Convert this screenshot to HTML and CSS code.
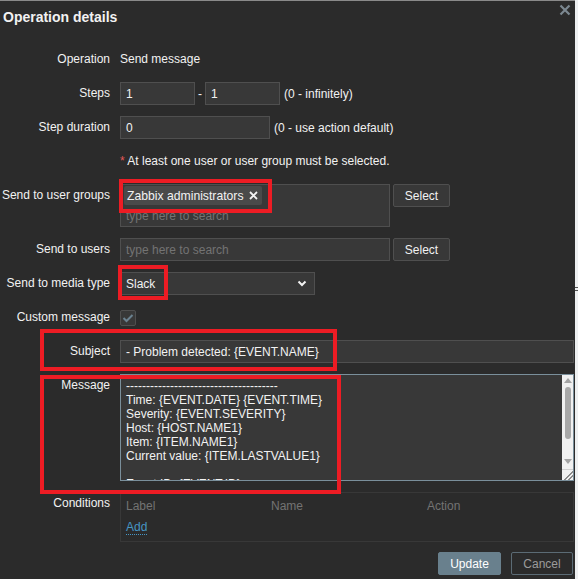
FILE: index.html
```html
<!DOCTYPE html>
<html>
<head>
<meta charset="utf-8">
<link rel="stylesheet" href="styles.css">
</head>
<body>
<div class="page">
<div class="dialog">
  <div class="header">
    <h1 class="title">Operation details</h1>
    <span class="close"><svg width="12" height="12" viewBox="0 0 12 12"><path d="M1.5 1.5 L10.5 10.5 M10.5 1.5 L1.5 10.5" stroke="#7c8891" stroke-width="2.2" fill="none"/></svg></span>
  </div>
  <div class="form">
    <div class="label">Operation</div>
    <div class="field"><span class="value">Send message</span></div>

    <div class="label">Steps</div>
    <div class="field">
      <span class="input w75">1</span><span class="dash">-</span><span class="input w75">1</span><span class="hint">(0 - infinitely)</span>
    </div>

    <div class="label">Step duration</div>
    <div class="field">
      <span class="input w150">0</span><span class="hint">(0 - use action default)</span>
    </div>

    <div class="label"></div>
    <div class="field"><span class="note"><span class="req">*</span> At least one user or user group must be selected.</span></div>

    <div class="label">Send to user groups</div>
    <div class="field top">
      <div class="multiselect">
        <span class="chip">Zabbix administrators<svg class="chip-x" width="9" height="9" viewBox="0 0 9 9"><path d="M1 1 L8 8 M8 1 L1 8" stroke="#f2f2f2" stroke-width="1.8" fill="none"/></svg></span>
        <span class="placeholder ms-ph">type here to search</span>
      </div>
      <span class="btn">Select</span>
    </div>

    <div class="label">Send to users</div>
    <div class="field">
      <span class="input w270"><span class="placeholder">type here to search</span></span>
      <span class="btn">Select</span>
    </div>

    <div class="label">Send to media type</div>
    <div class="field">
      <span class="input w195 select">Slack<svg class="chev" width="10" height="7" viewBox="0 0 10 7"><path d="M1.5 1.5 L5 5 L8.5 1.5" stroke="#f2f2f2" stroke-width="2" fill="none"/></svg></span>
    </div>

    <div class="label">Custom message</div>
    <div class="field">
      <span class="checkbox"><svg width="12" height="10" viewBox="0 0 12 10"><path d="M1.5 5 L4.5 8 L10.5 2" stroke="#6a818f" stroke-width="2" fill="none"/></svg></span>
    </div>

    <div class="label">Subject</div>
    <div class="field">
      <span class="input wfull">- Problem detected: {EVENT.NAME}</span>
    </div>

    <div class="label">Message</div>
    <div class="field top">
      <div class="textarea">
        <div class="ta-text">--------------------------------------<br>Time: {EVENT.DATE} {EVENT.TIME}<br>Severity: {EVENT.SEVERITY}<br>Host: {HOST.NAME1}<br>Item: {ITEM.NAME1}<br>Current value: {ITEM.LASTVALUE1}<br><br>Event ID: {EVENT.ID}</div>
        <div class="scrollbar">
          <span class="arrow up"></span>
          <span class="thumb"></span>
          <span class="arrow down"></span>
          <span class="grip"></span>
        </div>
      </div>
    </div>

    <div class="label">Conditions</div>
    <div class="field top">
      <div class="conditions">
        <div class="cond-head"><span class="c1">Label</span><span class="c2">Name</span><span class="c3">Action</span></div>
        <a class="link">Add</a>
      </div>
    </div>
  </div>
  <div class="footer">
    <span class="btn primary">Update</span>
    <span class="btn cancel">Cancel</span>
  </div>

  <div class="mark m1"></div>
  <div class="mark m2"></div>
  <div class="mark m3"></div>
  <div class="mark m4"></div>
</div>
<div class="edge"><span class="edge-tick"></span></div>
</div>
</body>
</html>
```

FILE: styles.css
```css
* { box-sizing: border-box; }
html, body { margin: 0; padding: 0; }
body {
  background: #2b2b2b;
  font-family: "Liberation Sans", Arial, sans-serif;
  font-size: 12px;
  color: #f2f2f2;
  width: 578px;
  height: 579px;
  overflow: hidden;
}
.page {
  display: flex;
  height: 579px;
}
.dialog {
  position: relative;
  width: 575px;
  height: 579px;
  background: #2b2b2b;
  border-top: 1px solid #8a8a8a;
}
.edge {
  width: 3px;
  height: 579px;
  background: #eef0f1;
  position: relative;
}
.edge-tick {
  position: absolute;
  left: 0;
  top: 287px;
  width: 3px;
  height: 4px;
  border-top: 1px solid #555;
  border-bottom: 1px solid #555;
}
.header {
  display: flex;
  justify-content: space-between;
  align-items: flex-start;
  height: 47px;
  padding: 8px 0 0 3px;
}
.title {
  margin: 0;
  font-size: 14px;
  font-weight: bold;
  line-height: 17px;
  color: #f2f2f2;
}
.close {
  display: block;
  width: 12px;
  height: 12px;
  margin: -5px 4px 0 0;
}
.close svg { display: block; }
.form {
  display: grid;
  grid-template-columns: 110px 454px;
  column-gap: 10px;
  row-gap: 11px;
}
.label {
  text-align: right;
  line-height: 23px;
  white-space: nowrap;
}
.field {
  display: flex;
  align-items: center;
  min-height: 23px;
  gap: 3px;
}
.field.top { align-items: flex-start; gap: 4px; }
.value { line-height: 23px; }
.input {
  display: flex;
  align-items: center;
  height: 23px;
  background: #383838;
  border: 1px solid #4f4f4f;
  padding: 0 5px;
  color: #f2f2f2;
  white-space: nowrap;
  overflow: hidden;
}
.w75 { width: 75px; }
.w150 { width: 150px; }
.w195 { width: 195px; }
.w270 { width: 270px; }
.wfull { width: 454px; }
.dash { width: 4px; text-align: center; }
.hint { margin-left: 1px; }
.note { line-height: 23px; }
.req { color: #e45959; }
.multiselect {
  width: 270px;
  height: 43px;
  background: #383838;
  border: 1px solid #4f4f4f;
  padding: 1px 3px 0;
  display: flex;
  flex-direction: column;
  align-items: flex-start;
  overflow: hidden;
}
.chip {
  display: inline-flex;
  align-items: center;
  height: 19px;
  flex: none;
  background: #4a4a4a;
  padding: 0 4px 0 3px;
  border-radius: 2px;
  white-space: nowrap;
  font-size: 12.2px;
}
.chip-x { display: block; margin-left: 5px; }
.placeholder { color: #737373; }
.ms-ph { line-height: 23px; padding-left: 2px; flex: none; }
.btn {
  display: inline-flex;
  align-items: center;
  justify-content: center;
  height: 23px;
  width: 57px;
  background: #383838;
  border: 1px solid #4f4f4f;
  color: #f2f2f2;
  border-radius: 2px;
}
.field.top .btn { margin-left: -1px; }
.select { justify-content: space-between; padding-right: 7px; }
.chev { display: block; }
.checkbox {
  display: flex;
  align-items: center;
  justify-content: center;
  width: 16px;
  height: 16px;
  background: #383838;
  border: 1px solid #4f4f4f;
  border-radius: 2px;
}
.checkbox svg { display: block; }
.textarea {
  display: flex;
  width: 454px;
  height: 107px;
  background: #383838;
  border: 1px solid #7a8f9b;
  overflow: hidden;
}
.ta-text {
  flex: 1;
  padding: 4px 5px;
  line-height: 14px;
  white-space: nowrap;
  overflow: hidden;
}
.scrollbar {
  width: 11px;
  background: #f0f0f0;
  display: flex;
  flex-direction: column;
  align-items: center;
  padding-top: 3px;
}
.arrow {
  width: 0;
  height: 0;
  border-left: 4px solid transparent;
  border-right: 4px solid transparent;
}
.arrow.up { border-bottom: 5px solid #a3a3a3; }
.arrow.down { border-top: 5px solid #a3a3a3; margin-top: auto; margin-bottom: 5px; }
.thumb {
  width: 6px;
  height: 52px;
  margin-top: 4px;
  background: #a8a8a8;
  border-radius: 3px;
}
.grip {
  width: 11px;
  height: 11px;
  border-top: 1px solid #d0d0d0;
  background: linear-gradient(135deg, transparent 55%, #8a8a8a 55%, #8a8a8a 62%, transparent 62%, transparent 75%, #8a8a8a 75%, #8a8a8a 82%, transparent 82%);
}
.conditions {
  width: 454px;
  height: 50px;
  border: 1px solid #383838;
  padding: 0 5px;
}
.cond-head {
  display: flex;
  line-height: 27px;
  color: #737373;
}
.c1 { width: 145px; }
.c2 { width: 156px; }
.link {
  display: inline-block;
  color: #4796c4;
  line-height: 14px;
  border-bottom: 1px dotted #4796c4;
}
.footer {
  display: flex;
  justify-content: flex-end;
  gap: 10px;
  padding: 10px 2px 0 0;
}
.btn.primary {
  width: 63px;
  background: #69808d;
  border-color: #69808d;
  color: #ffffff;
}
.btn.cancel {
  width: 62px;
  background: transparent;
  border-color: #5b6b75;
  color: #9b9b9b;
}
.mark {
  position: absolute;
  border: 4px solid #ed1c24;
}
.m1 { left: 119px; top: 178px; width: 153px; height: 34px; }
.m2 { left: 118px; top: 264px; width: 50px; height: 35px; }
.m3 { left: 40px; top: 328px; width: 297px; height: 42px; }
.m4 { left: 40px; top: 374px; width: 301px; height: 119px; }
```
